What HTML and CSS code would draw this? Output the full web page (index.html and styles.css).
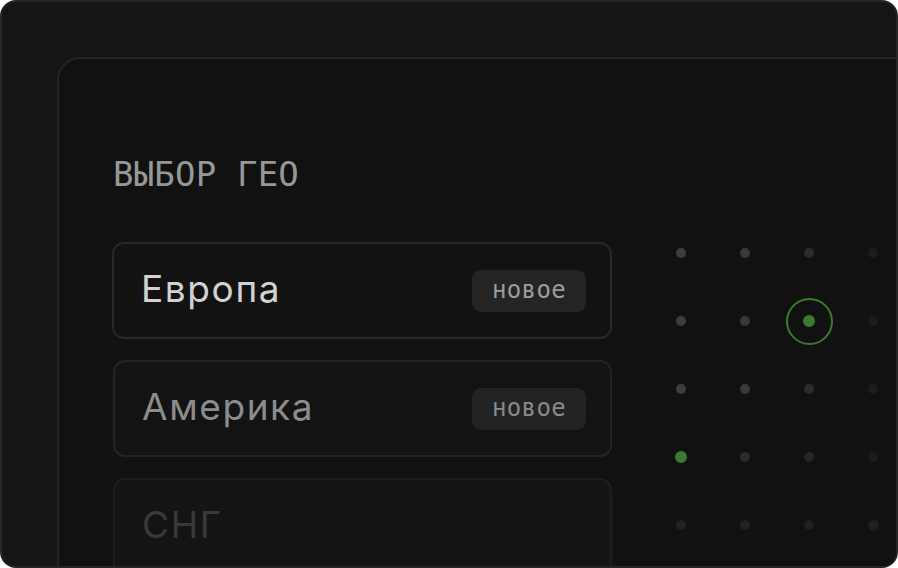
FILE: index.html
```html
<!DOCTYPE html>
<html lang="ru">
<head>
<meta charset="utf-8">
<link rel="stylesheet" href="styles.css">
</head>
<body>
<div class="frame">
  <div class="panel">
    <div class="left">
      <div class="title">ВЫБОР ГЕО</div>
      <div class="list">
        <div class="item item-1"><span class="name">Европа</span><span class="badge">новое</span></div>
        <div class="item item-2"><span class="name">Америка</span><span class="badge">новое</span></div>
        <div class="item item-3"><span class="name">СНГ</span></div>
      </div>
    </div>
    <div class="dots">
      <span class="cell"><i class="dot d1"></i></span>
      <span class="cell"><i class="dot d2"></i></span>
      <span class="cell"><i class="dot d3"></i></span>
      <span class="cell"><i class="dot d4"></i></span>

      <span class="cell"><i class="dot d1"></i></span>
      <span class="cell"><i class="dot d2"></i></span>
      <span class="cell active"><i class="dot green"></i></span>
      <span class="cell"><i class="dot d4"></i></span>

      <span class="cell"><i class="dot d1"></i></span>
      <span class="cell"><i class="dot d2"></i></span>
      <span class="cell"><i class="dot d3"></i></span>
      <span class="cell"><i class="dot d4"></i></span>

      <span class="cell"><i class="dot green"></i></span>
      <span class="cell"><i class="dot d3"></i></span>
      <span class="cell"><i class="dot d3b"></i></span>
      <span class="cell"><i class="dot d4"></i></span>

      <span class="cell"><i class="dot d5"></i></span>
      <span class="cell"><i class="dot d5"></i></span>
      <span class="cell"><i class="dot d5b"></i></span>
      <span class="cell"><i class="dot g5"></i></span>
    </div>
  </div>
</div>
</body>
</html>
```

FILE: styles.css
```css
html, body {
  margin: 0;
  padding: 0;
  background: #ffffff;
}

.frame {
  box-sizing: border-box;
  width: 898px;
  height: 568px;
  background: #151515;
  border: 2px solid #262626;
  border-radius: 16px;
  overflow: hidden;
  padding: 55px 0 0 55px;
}

.panel {
  box-sizing: border-box;
  width: 900px;
  height: 600px;
  background: #111111;
  border: 2px solid #252525;
  border-radius: 23px;
  display: flex;
  align-items: flex-start;
}

.left {
  padding: 95px 0 0 53px;
  width: 500px;
  flex: none;
}

.title {
  font-family: "DejaVu Sans Mono", monospace;
  font-size: 34px;
  line-height: 40px;
  color: #979797;
  letter-spacing: 0.2px;
  margin: 0 0 48px 1px;
}

.list {
  display: flex;
  flex-direction: column;
  gap: 21px;
}

.item {
  box-sizing: border-box;
  height: 97px;
  border: 2px solid #282828;
  border-radius: 12px;
  background: #121212;
  display: flex;
  align-items: center;
  justify-content: space-between;
  padding: 0 24px 0 27px;
}

.item-2 {
  margin-left: 1px;
  border-color: #242424;
  background: #131313;
}

.item-3 {
  margin-left: 1px;
  border-color: #1d1d1d;
  background: #141414;
}

.name {
  font-family: "Inter", "Noto Sans", sans-serif;
  font-size: 37px;
  line-height: 44px;
  letter-spacing: 1.6px;
  color: #d2d2d2;
  padding-bottom: 4px;
}

.item-2 .name { color: #8c8c8c; }
.item-3 .name { color: #393939; }

.badge {
  box-sizing: border-box;
  width: 114px;
  height: 42px;
  border-radius: 9px;
  background: #242424;
  color: #9c9c9c;
  font-family: "DejaVu Sans Mono", monospace;
  font-size: 24px;
  letter-spacing: 0.4px;
  display: flex;
  align-items: center;
  justify-content: center;
  padding-bottom: 2px;
}

.item-2 .badge { color: #8a8a8a; background: #232323; }

.dots {
  margin: 160px 0 0 37px;
  display: grid;
  grid-template-columns: repeat(4, 64px);
  grid-template-rows: repeat(5, 68px);
  flex: none;
}

.cell {
  position: relative;
  display: flex;
  align-items: center;
  justify-content: center;
}

.dot {
  display: block;
  width: 10px;
  height: 10px;
  border-radius: 50%;
}

.d1 { background: #3d3d3d; }
.d2 { background: #393939; }
.d3 { background: #2b2b2b; }
.d3b { background: #262626; }
.d4 { background: #1c1c1c; }
.d5 { background: #222222; }
.d5b { background: #1f1f1f; }
.g5 { background: #1a221a; width: 11px; height: 11px; }

.green {
  width: 12px;
  height: 12px;
  background: #3d7c2e;
}

.active::after {
  content: "";
  position: absolute;
  left: 50%;
  top: 50%;
  width: 43px;
  height: 43px;
  margin: -23.5px 0 0 -23.5px;
  border: 2px solid #3a7a2c;
  border-radius: 50%;
}
```
